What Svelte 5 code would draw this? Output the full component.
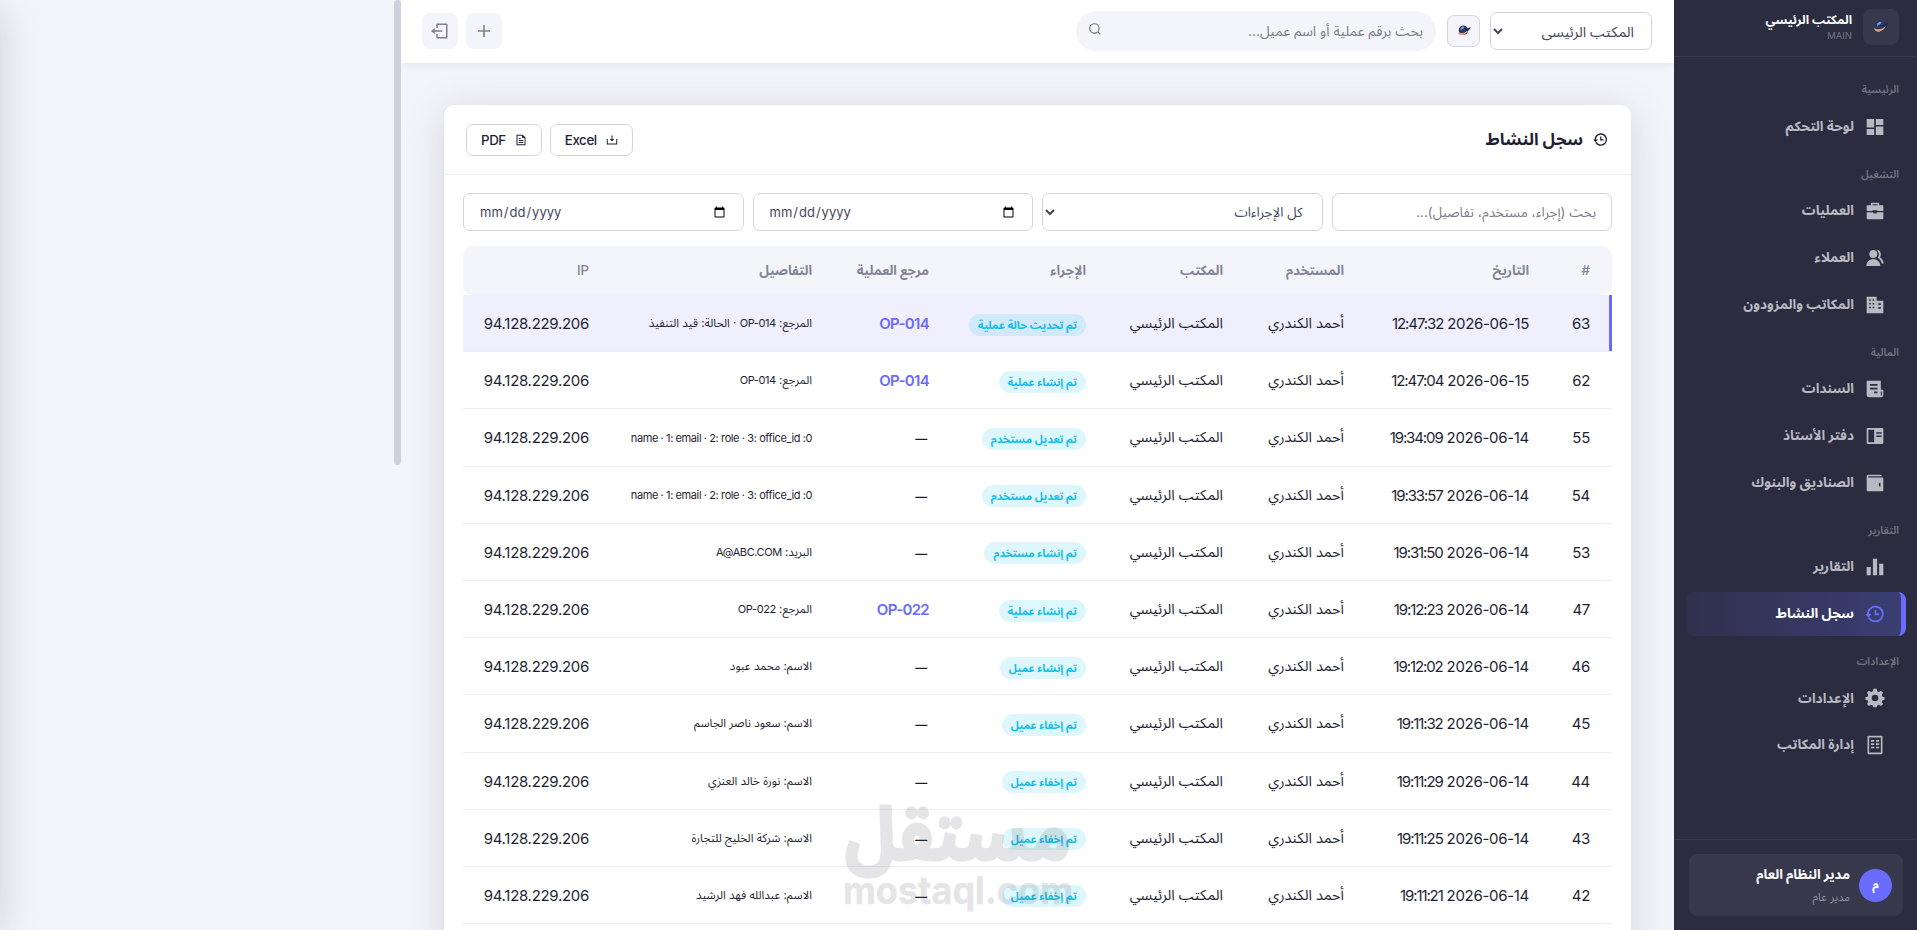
<script>
  const menu = [
    { title: "الرئيسية", items: [{ label: "لوحة التحكم", icon: "dashboard" }] },
    {
      title: "التشغيل",
      items: [
        { label: "العمليات", icon: "briefcase" },
        { label: "العملاء", icon: "group" },
        { label: "المكاتب والمزودون", icon: "building" },
      ],
    },
    {
      title: "المالية",
      items: [
        { label: "السندات", icon: "bill" },
        { label: "دفتر الأستاذ", icon: "book" },
        { label: "الصناديق والبنوك", icon: "wallet" },
      ],
    },
    {
      title: "التقارير",
      items: [
        { label: "التقارير", icon: "chart" },
        { label: "سجل النشاط", icon: "history", active: true },
      ],
    },
    {
      title: "الإعدادات",
      items: [
        { label: "الإعدادات", icon: "settings" },
        { label: "إدارة المكاتب", icon: "office" },
      ],
    },
  ];

  // 24x24 icon shapes
  const icons = {
    dashboard: "M2 12.500h9V2.500H2v10zm0 9h9v-7H2v7zm11 0h9v-10h-9v10zm0-19v7h9v-7h-9z",
    briefcase:
      "M7 5V3a1 1 0 0 1 1-1h8a1 1 0 0 1 1 1v2h4a1 1 0 0 1 1 1v6h-7v-1H9v1H2V6a1 1 0 0 1 1-1h4zm2 0h6V4H9v1zM2 13.500h8V15h4v-1.500h8V21a1 1 0 0 1-1 1H3a1 1 0 0 1-1-1v-7.500z",
    group:
      "M10 12a4.800 4.800 0 1 0 0-9.600A4.800 4.800 0 0 0 10 12zm-8.500 9.500a8.500 8.300 0 0 1 17 0h-17zM15.500 2c3.700 1.600 4.400 6 2.400 9 2.600 2 4.300 4.600 4.600 7.600h-2.300c-.5-2.800-2.200-5.200-4.900-7 2-2.700 2-6-.8-8.200l1-1.400z",
    building:
      "M2 2h12v5h8v15H2V2zm3 3v2h2V5H5zm4 0v2h2V5H9zM5 9.500v2h2v-2H5zm4 0v2h2v-2H9zM5 14v2h2v-2H5zm4 0v2h2v-2H9zm7-4v2h3v-2h-3zm0 4.500v2h3v-2h-3z",
    bill: "M2 2h17v11h3v6a3 3 0 0 1-3 3H5a3 3 0 0 1-3-3V2zm4 4v2h9V6H6zm0 4.500v2h9v-2H6zm5 4.500v2h4v-2h-4zm8 0v4.500a.8.8 0 0 0 1.300 0V15H19z",
    book: "M3 2.500h18a1 1 0 0 1 1 1v17a1 1 0 0 1-1 1H3a1 1 0 0 1-1-1v-17a1 1 0 0 1 1-1zm1 2v15h7v-15H4zm9.500 3v1.800H20V7.500h-6.500zm0 4v1.800H20v-1.800h-6.500z",
    wallet:
      "M4 2h15a1 1 0 0 1 1 1v1H4v1.500h17a1 1 0 0 1 1 1V21a1 1 0 0 1-1 1H3a1 1 0 0 1-1-1V4a2 2 0 0 1 2-2zm14.500 9.500a2 2.500 0 0 0 0 5V11.500z",
    chart: "M2 12h5v10H2V12zm7.500-10h5v20h-5V2zM17 8h5v14h-5V8z",
    history:
      "M12.500 2a10 10 0 1 1-8.700 15l1.900-1.100A7.800 7.800 0 1 0 4.700 12H8l-4 4.500L.5 12h2A10 10 0 0 1 12.500 2zm1 5v4.500H17v2h-5.500V7h2z",
    settings:
      "M10 1h4l.6 3 2 .9 2.600-1.600 2.500 2.500L20.100 8.400l.9 2 2.500.6v3l-2.500.7-.9 2 1.600 2.500-2.500 2.500-2.600-1.500-2 .8L14 23h-4l-.6-2-2-.8-2.600 1.500-2.500-2.500 1.600-2.500-.9-2L.5 14v-3l2.500-.6.9-2L2.300 5.800l2.500-2.500L7.400 4.900l2-.9L10 1zm2 7a4 4 0 1 0 0 8 4 4 0 0 0 0-8z",
    office:
      "M4 1h16a1 1 0 0 1 1 1v20a1 1 0 0 1-1 1H4a1 1 0 0 1-1-1V2a1 1 0 0 1 1-1zm1 2v18h14V3H5zM7 6h4v2H7V6zm6 0h4v2h-4V6zm-6 4h4v2H7v-2zm6 0h4v2h-4v-2zm-6 4h4v2H7v-2zm6 0h4v2h-4v-2z",
    logout:
      "M8 2h13a1 1 0 0 1 1 1v18a1 1 0 0 1-1 1H8a1 1 0 0 1-1-1v-5h2v4h11V4H9v4H7V3a1 1 0 0 1 1-1zM0 12l5-4v3h10v2H5v3l-5-4z",
    plus: "M10.800 3h2.400v7.800H21v2.400h-7.800V21h-2.400v-7.800H3v-2.400h7.800V3z",
    search:
      "M11 2a9 9 0 0 1 7 14.600l3.700 3.700-1.400 1.400-3.700-3.700A9 9 0 1 1 11 2zm0 2a7 7 0 1 0 0 14 7 7 0 0 0 0-14z",
    download: "M11 3h2v7h3.500L12 15l-4.500-5H11V3zM1.500 10h2v9h17v-9h2v11h-21V10z",
    file: "M3 1.500h12.500L21 7v15.500H3v-21zm2 2v17h14V8h-5V3.500H5zM7.500 8h4v2h-4V8zm0 4h9v1.800h-9V12zm0 4h9v1.800h-9V16z",
  };

  const columns = ["#", "التاريخ", "المستخدم", "المكتب", "الإجراء", "مرجع العملية", "التفاصيل", "IP"];

  const user = "أحمد الكندري";
  const office = "المكتب الرئيسي";
  const ip = "94.128.229.206";

  const rows = [
    { id: 63, date: "2026-06-15", time: "12:47:32", action: "تم تحديث حالة عملية", ref: "OP-014", details: "المرجع: OP-014 · الحالة: قيد التنفيذ", selected: true },
    { id: 62, date: "2026-06-15", time: "12:47:04", action: "تم إنشاء عملية", ref: "OP-014", details: "المرجع: OP-014" },
    { id: 55, date: "2026-06-14", time: "19:34:09", action: "تم تعديل مستخدم", details: "0: name · 1: email · 2: role · 3: office_id" },
    { id: 54, date: "2026-06-14", time: "19:33:57", action: "تم تعديل مستخدم", details: "0: name · 1: email · 2: role · 3: office_id" },
    { id: 53, date: "2026-06-14", time: "19:31:50", action: "تم إنشاء مستخدم", details: "البريد: A@ABC.COM" },
    { id: 47, date: "2026-06-14", time: "19:12:23", action: "تم إنشاء عملية", ref: "OP-022", details: "المرجع: OP-022" },
    { id: 46, date: "2026-06-14", time: "19:12:02", action: "تم إنشاء عميل", details: "الاسم: محمد عبود" },
    { id: 45, date: "2026-06-14", time: "19:11:32", action: "تم إخفاء عميل", details: "الاسم: سعود ناصر الجاسم" },
    { id: 44, date: "2026-06-14", time: "19:11:29", action: "تم إخفاء عميل", details: "الاسم: نورة خالد العنزي" },
    { id: 43, date: "2026-06-14", time: "19:11:25", action: "تم إخفاء عميل", details: "الاسم: شركة الخليج للتجارة" },
    { id: 42, date: "2026-06-14", time: "19:11:21", action: "تم إخفاء عميل", details: "الاسم: عبدالله فهد الرشيد" },
  ];

  // odd parts are the latin runs
  const splitLatin = (text) => text.split(/([0-9A-Za-z][0-9A-Za-z@.:_· -]*[0-9A-Za-z])/);
</script>

{#snippet icon(name, size)}
  <svg class="icon" width={size} height={size} viewBox="0 0 24 24" fill="currentColor" fill-rule="evenodd">
    <path d={icons[name]} />
  </svg>
{/snippet}

{#snippet logo(size)}
  <svg class="icon" width={size} height={size} viewBox="0 0 24 24" fill="none">
    <circle cx="11" cy="10.500" r="8" fill="#26356b" />
    <path d="M6 7l4-3 3 1-2 3-3 1-1 3z" fill="#8a9ac4" />
    <path d="M1.500 14c1.500 8 13.500 7 19-5-5 6-12 8-19 5z" fill="#d9a27a" />
    <path d="M14 10l9.500-5-3 5.500-4 1.500z" fill="#1b2450" />
  </svg>
{/snippet}

<div class="app" dir="rtl">
  <aside class="sidebar">
    <div class="brand">
      <div class="brand-logo">{@render logo(16)}</div>
      <div>
        <div class="brand-name">{office}</div>
        <div class="brand-code">MAIN</div>
      </div>
    </div>
    <nav>
      {#each menu as group}
        <div class="nav-title">{group.title}</div>
        {#each group.items as item}
          <div class="nav-item" class:active={item.active}>
            <span class="nav-icon">{@render icon(item.icon, 20)}</span>
            <span>{item.label}</span>
          </div>
        {/each}
      {/each}
    </nav>
    <div class="sidebar-foot">
      <div class="user-card">
        <div class="avatar">م</div>
        <div>
          <div class="user-name">مدير النظام العام</div>
          <div class="user-role">مدير عام</div>
        </div>
      </div>
    </div>
  </aside>

  <main>
    <header class="topbar">
      <select class="office-select"><option>{office}</option></select>
      <button class="logo-btn">{@render logo(14)}</button>
      <label class="search">
        <input type="text" placeholder="بحث برقم عملية أو اسم عميل..." />
        {@render icon("search", 14)}
      </label>
      <div class="spacer"></div>
      <button class="square">{@render icon("plus", 16)}</button>
      <button class="square">{@render icon("logout", 18)}</button>
    </header>

    <section class="card">
      <div class="card-head">
        {@render icon("history", 15)}
        <h1>سجل النشاط</h1>
        <div class="spacer"></div>
        <button class="export">{@render icon("download", 12)}Excel</button>
        <button class="export">{@render icon("file", 12)}PDF</button>
      </div>
      <div class="filters">
        <input type="text" placeholder="بحث (إجراء، مستخدم، تفاصيل)..." />
        <select><option>كل الإجراءات</option></select>
        <input type="date" dir="ltr" />
        <input type="date" dir="ltr" />
      </div>
      <table>
        <colgroup>
          <col class="c-id" />
          <col class="c-date" />
          <col class="c-user" />
          <col class="c-office" />
          <col class="c-action" />
          <col class="c-ref" />
          <col class="c-details" />
          <col class="c-ip" />
        </colgroup>
        <thead>
          <tr>
            {#each columns as column}
              <th class:latin={column == "#" || column == "IP"}>{column}</th>
            {/each}
          </tr>
        </thead>
        <tbody>
          {#each rows as row}
            <tr class:selected={row.selected}>
              <td class="num">{row.id}</td>
              <td class="num"><span dir="ltr"><span class="time">{row.time}</span> {row.date}</span></td>
              <td>{user}</td>
              <td>{office}</td>
              <td><span class="badge">{row.action}</span></td>
              <td class="num">
                {#if row.ref}
                  <b>{row.ref}</b>
                {:else}
                  <span class="dash">—</span>
                {/if}
              </td>
              <td class="details">
                {#each splitLatin(row.details) as part, i}{#if i % 2}<span class="lat">{part}</span>{:else}{part}{/if}{/each}
              </td>
              <td class="num">{ip}</td>
            </tr>
          {/each}
        </tbody>
      </table>
    </section>
  </main>

  <div class="gutter">
    <div class="scroll-thumb"></div>
  </div>
  <div class="drawer"></div>

  <svg class="watermark" width="240" height="120" viewBox="0 0 240 120" direction="ltr">
    <text x="5" y="58" textLength="226" lengthAdjust="spacingAndGlyphs" class="wm-ar">مستقل</text>
    <text x="3" y="102" textLength="230" lengthAdjust="spacingAndGlyphs" class="wm-en">mostaql.com</text>
  </svg>
</div>

<style>
  :global(body) {
    background: #f4f5fa;
    overflow: hidden;
  }
  .app {
    position: relative;
    display: flex;
    height: 930px;
    overflow: hidden;
    font-family: "Inter", "Noto Sans Arabic", "DejaVu Sans", sans-serif;
    font-size: 13px;
    color: #1f1f33;
  }
  .app * {
    box-sizing: border-box;
  }
  .icon {
    display: block;
    flex: none;
  }
  .spacer {
    flex: 1;
  }
  button,
  input,
  select {
    font-family: inherit;
    outline: none;
  }

  .sidebar {
    display: flex;
    flex-direction: column;
    width: 243px;
    flex: none;
    background: #2b2c40;
    color: #b9b9c1;
  }
  .brand {
    display: flex;
    align-items: center;
    gap: 11px;
    height: 57px;
    padding: 0 18px 3px;
    border-bottom: 1px solid #3a3b4e;
  }
  .brand-logo {
    display: flex;
    align-items: center;
    justify-content: center;
    width: 36px;
    height: 36px;
    border-radius: 8px;
    background: #37384b;
  }
  .brand-name {
    font-size: 12.300px;
    font-weight: 700;
    line-height: 18px;
    color: #fff;
  }
  .brand-code {
    font-size: 9.500px;
    line-height: 14px;
    color: #777480;
  }
  nav {
    flex: 1;
    padding: 10px 11px 0 12px;
  }
  .nav-title {
    padding: 16.300px 7px 7.300px;
    font-size: 10.600px;
    font-weight: 600;
    line-height: 14px;
    color: #777480;
  }
  .nav-item {
    display: flex;
    align-items: center;
    gap: 11px;
    height: 44px;
    margin-bottom: 2.800px;
    padding: 0 21px;
    border-radius: 8px;
    font-size: 13.600px;
    font-weight: 700;
  }
  .active {
    padding-right: 16px;
    border-right: 5px solid #696cff;
    background: linear-gradient(to left, #3a3e72, #30304d);
    color: #fff;
  }
  .active .nav-icon {
    color: #696cff;
  }
  .sidebar-foot {
    height: 91px;
    padding: 14px 14px 14px 15px;
    border-top: 1px solid #3a3b4e;
  }
  .user-card {
    display: flex;
    align-items: center;
    gap: 9px;
    height: 62px;
    padding: 0 11px;
    border-radius: 8px;
    background: #37384b;
  }
  .avatar {
    width: 33px;
    height: 33px;
    border-radius: 50%;
    background: #696cff;
    color: #fff;
    font-size: 12px;
    font-weight: 700;
    line-height: 32px;
    text-align: center;
  }
  .user-name {
    font-size: 13.400px;
    font-weight: 700;
    line-height: 24px;
    color: #fff;
  }
  .user-role {
    font-size: 11.300px;
    line-height: 22px;
    color: #96959f;
  }

  main {
    width: 1273px;
    flex: none;
  }
  .topbar {
    display: flex;
    align-items: center;
    height: 63px;
    padding: 0 22px 1px 21px;
    background: #fff;
    box-shadow: 0 2px 8px rgba(60, 60, 90, 0.08);
  }
  select,
  .filters input {
    height: 38px;
    padding: 0 15px;
    border: 1px solid #d3d6e0;
    border-radius: 7px;
    background: #fff;
    color: #46465a;
    font-size: 13.400px;
  }
  .office-select {
    width: 162px;
    padding: 0 13px;
    font-size: 14.400px;
  }
  .logo-btn {
    display: flex;
    align-items: center;
    justify-content: center;
    width: 33px;
    height: 32px;
    margin: 0 10px 0 11px;
    padding: 0;
    border: 1px solid #d3d6e0;
    border-radius: 7px;
    background: #f4f5fa;
  }
  .search {
    display: flex;
    align-items: center;
    width: 360px;
    height: 40px;
    padding: 0 13px 4px 12px;
    border-radius: 20px;
    background: #f4f5fa;
    color: #6d7386;
  }
  .search input {
    flex: 1;
    padding: 4px 0 0;
    border: 0;
    background: none;
    font-size: 13.900px;
  }
  ::placeholder {
    color: #7b7b85;
  }
  .square {
    display: flex;
    align-items: center;
    justify-content: center;
    width: 36px;
    height: 36px;
    margin-right: 8px;
    padding: 0;
    border: 0;
    border-radius: 8px;
    background: #f4f5fa;
    color: #7b8193;
  }

  .card {
    height: 900px;
    margin: 42px 43px 0 43px;
    border-radius: 10px;
    background: #fff;
    box-shadow: 0 6px 40px rgba(60, 62, 80, 0.17);
  }
  .card-head {
    display: flex;
    align-items: center;
    height: 70px;
    padding: 0 23px 0 22px;
    border-bottom: 1px solid #eeeff4;
  }
  h1 {
    margin: 0 10px 0 0;
    font-size: 16.900px;
    font-weight: 700;
  }
  .export {
    display: flex;
    align-items: center;
    gap: 9px;
    height: 32px;
    margin-right: 8px;
    padding: 0 14px;
    border: 1px solid #d3d6e0;
    border-radius: 7px;
    background: #fff;
    color: #22223a;
    font-size: 13.300px;
    font-weight: 500;
    letter-spacing: -0.400px;
  }
  .filters {
    display: grid;
    grid-template-columns: repeat(4, 1fr);
    gap: 9px;
    padding: 18px 19px 15px 19px;
  }
  .filters input[type="date"] {
    font-size: 13px;
  }

  table {
    width: 1149px;
    margin-right: 19px;
    border-collapse: separate;
    border-spacing: 0;
    table-layout: fixed;
  }
  .c-id {
    width: 61px;
  }
  .c-date {
    width: 185px;
  }
  .c-user {
    width: 121px;
  }
  .c-office {
    width: 137px;
  }
  .c-action {
    width: 157px;
  }
  .c-ref {
    width: 117px;
  }
  .c-details {
    width: 223px;
  }
  .c-ip {
    width: 148px;
  }
  th,
  td {
    padding: 0 22px;
    text-align: right;
    white-space: nowrap;
  }
  th {
    height: 49px;
    background: #f4f5fa;
    color: #7f8596;
    font-size: 13.200px;
    font-weight: 700;
  }
  th.latin {
    padding-bottom: 2px;
    font-weight: 500;
  }
  th:first-child {
    border-radius: 0 10px 10px 0;
  }
  th:last-child {
    border-radius: 10px 0 0 10px;
  }
  td {
    height: 57.200px;
    padding-top: 1px;
    border-bottom: 1px solid #eeeff4;
    font-size: 14.500px;
  }
  .num {
    font-size: 15px;
    letter-spacing: -0.300px;
  }
  .time {
    letter-spacing: -1.100px;
  }
  .dash {
    margin-right: 2px;
    font-size: 12px;
    font-weight: 600;
  }
  b {
    color: #696cff;
    font-weight: 600;
    letter-spacing: -0.700px;
  }
  .details {
    font-size: 11.600px;
  }
  .lat {
    font-size: 11px;
    letter-spacing: -0.400px;
  }
  .badge {
    display: inline-block;
    height: 22px;
    margin-top: 2px;
    padding: 0 9px;
    border-radius: 11px;
    background: rgba(3, 195, 236, 0.13);
    color: #13bdeb;
    font-size: 10.900px;
    font-weight: 700;
    line-height: 22px;
    vertical-align: middle;
  }
  .selected td {
    background: #efeffd;
  }
  .selected td:first-child {
    box-shadow: inset -3px 0 #696cff;
  }

  .gutter {
    display: flex;
    flex: 1;
  }
  .scroll-thumb {
    width: 7px;
    height: 465px;
    border-radius: 4px;
    background: #cfd2dc;
  }
  /* closed drawer, only its shadow reaches the page */
  .drawer {
    position: absolute;
    left: -300px;
    top: 0;
    width: 300px;
    height: 930px;
    box-shadow: 0 8px 40px rgba(30, 30, 30, 0.17);
  }

  .watermark {
    position: absolute;
    left: 840px;
    top: 802px;
    overflow: visible;
    fill: #5a5a64;
    stroke: #5a5a64;
    stroke-linejoin: round;
    opacity: 0.15;
    pointer-events: none;
  }
  .wm-ar {
    font: 700 74px "Noto Sans Arabic", "DejaVu Sans", sans-serif;
    stroke-width: 3px;
  }
  .wm-en {
    font: 700 38px "Inter", sans-serif;
    stroke-width: 0.500px;
  }
</style>
